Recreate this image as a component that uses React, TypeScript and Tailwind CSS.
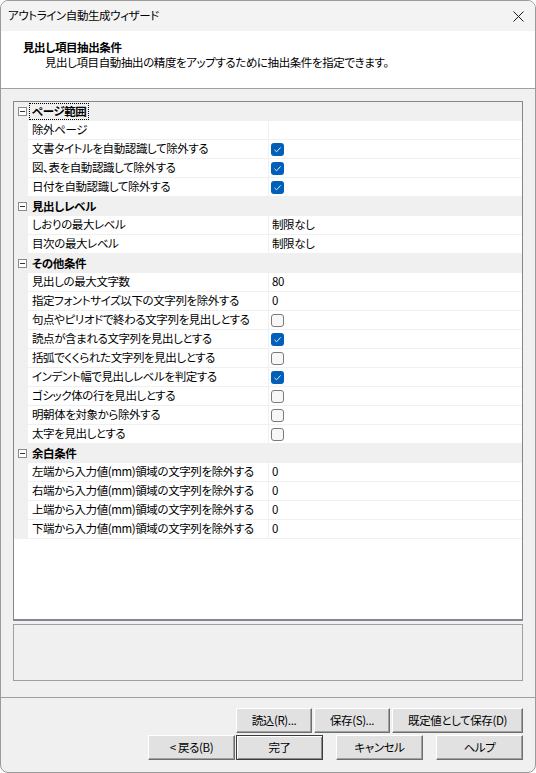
import React from 'react';

type Row =
  | { kind: 'cat'; label: string; focused?: boolean }
  | { kind: 'text'; label: string; value: string }
  | { kind: 'check'; label: string; checked: boolean };

const rows: Row[] = [
  { kind: 'cat', label: 'ページ範囲', focused: true },
  { kind: 'text', label: '除外ページ', value: '' },
  { kind: 'check', label: '文書タイトルを自動認識して除外する', checked: true },
  { kind: 'check', label: '図、表を自動認識して除外する', checked: true },
  { kind: 'check', label: '日付を自動認識して除外する', checked: true },
  { kind: 'cat', label: '見出しレベル' },
  { kind: 'text', label: 'しおりの最大レベル', value: '制限なし' },
  { kind: 'text', label: '目次の最大レベル', value: '制限なし' },
  { kind: 'cat', label: 'その他条件' },
  { kind: 'text', label: '見出しの最大文字数', value: '80' },
  { kind: 'text', label: '指定フォントサイズ以下の文字列を除外する', value: '0' },
  { kind: 'check', label: '句点やピリオドで終わる文字列を見出しとする', checked: false },
  { kind: 'check', label: '読点が含まれる文字列を見出しとする', checked: true },
  { kind: 'check', label: '括弧でくくられた文字列を見出しとする', checked: false },
  { kind: 'check', label: 'インデント幅で見出しレベルを判定する', checked: true },
  { kind: 'check', label: 'ゴシック体の行を見出しとする', checked: false },
  { kind: 'check', label: '明朝体を対象から除外する', checked: false },
  { kind: 'check', label: '太字を見出しとする', checked: false },
  { kind: 'cat', label: '余白条件' },
  { kind: 'text', label: '左端から入力値(mm)領域の文字列を除外する', value: '0' },
  { kind: 'text', label: '右端から入力値(mm)領域の文字列を除外する', value: '0' },
  { kind: 'text', label: '上端から入力値(mm)領域の文字列を除外する', value: '0' },
  { kind: 'text', label: '下端から入力値(mm)領域の文字列を除外する', value: '0' },
];

function CheckBox({ checked }: { checked: boolean }) {
  if (checked) {
    return (
      <div className="w-[13px] h-[13px] rounded-[3px] bg-[#005fb8] flex items-center justify-center">
        <svg width="9" height="9" viewBox="0 0 9 9">
          <path d="M1.5 4.8 L3.6 6.8 L7.6 2.4" fill="none" stroke="#ffffff" strokeWidth="0.9" />
        </svg>
      </div>
    );
  }
  return <div className="w-[13px] h-[13px] rounded-[3px] border border-[#7a7a7a] bg-[#f7f7f7]" />;
}

function MinusBox() {
  return (
    <div className="w-[9px] h-[9px] border border-[#8a8a8a] bg-white flex items-center justify-center">
      <div className="w-[5px] h-px bg-[#333]" />
    </div>
  );
}

function GridRow({ row }: { row: Row }) {
  if (row.kind === 'cat') {
    return (
      <div className="flex h-[19px] bg-[#f0f0f0] items-center">
        <div className="w-[14px] flex justify-center pl-[2px]">
          <MinusBox />
        </div>
        <div
          className={`ml-px h-[17px] px-[3px] flex items-center font-bold ${
            row.focused ? 'outline-1 outline-dotted outline-black -outline-offset-1' : ''
          }`}
        >
          {row.label}
        </div>
      </div>
    );
  }
  return (
    <div className="flex h-[19px]">
      <div className="w-[14px] bg-[#f0f0f0]" />
      <div className="w-[240px] pl-[4px] flex items-center border-b border-[#f0f0f0] whitespace-nowrap overflow-hidden">
        {row.label}
      </div>
      <div className="flex-1 pl-[2px] flex items-center border-l border-b border-[#f0f0f0]">
        {row.kind === 'check' ? <CheckBox checked={row.checked} /> : <span className="pl-px">{row.value}</span>}
      </div>
    </div>
  );
}

function Btn({ label, w, primary }: { label: string; w: string; primary?: boolean }) {
  return (
    <button
      className={`${w} h-[25px] bg-[#e1e1e1] flex items-center justify-center ${
        primary
          ? 'border border-[#3c3c3c] shadow-[inset_1px_1px_0_#ffffff,inset_-1px_-1px_0_#8a8a8a]'
          : 'border border-t-white border-l-white border-r-[#6e6e6e] border-b-[#6e6e6e] shadow-[inset_-1px_-1px_0_#a0a0a0]'
      }`}
    >
      {label}
    </button>
  );
}

export default function App() {
  return (
    <div className="w-[536px] h-[773px] bg-[#f0f0f0] border border-[#9a9a9a] rounded-lg overflow-hidden flex flex-col text-[11.5px] tracking-[-0.4px] text-black font-['Noto_Sans_CJK_JP','Noto_Sans',sans-serif] [font-feature-settings:'palt']">
      <div className="h-[30px] bg-[#f3f3f3] flex items-center justify-between pl-[7px] pr-[11px]">
        <span>アウトライン自動生成ウィザード</span>
        <svg width="11" height="11" viewBox="0 0 11 11">
          <path d="M0.5 0.5 L10.5 10.5 M10.5 0.5 L0.5 10.5" stroke="#1a1a1a" strokeWidth="1" />
        </svg>
      </div>

      <div className="h-[58px] bg-white border-b border-[#a0a0a0] pt-[9px] leading-[15px]">
        <div className="pl-[22px] font-bold">見出し項目抽出条件</div>
        <div className="pl-[44px]">見出し項目自動抽出の精度をアップするために抽出条件を指定できます。</div>
      </div>

      <div className="px-[12px] pt-[12px]">
        <div className="h-[520px] bg-white border border-b-2 border-[#828790] flex flex-col">
          {rows.map((r, i) => (
            <GridRow key={i} row={r} />
          ))}
        </div>
        <div className="mt-[3px] h-[57px] border border-[#a0a0a0] bg-[#f0f0f0]" />
      </div>

      <div className="mt-[16px] border-t border-[#a0a0a0]" />

      <div className="pt-[10px] pr-[12px] flex flex-col items-end gap-[2px]">
        <div className="flex gap-[2px]">
          <Btn label="読込(R)..." w="w-[76px]" />
          <Btn label="保存(S)..." w="w-[76px]" />
          <Btn label="既定値として保存(D)" w="w-[131px]" />
        </div>
        <div className="flex">
          <Btn label="< 戻る(B)" w="w-[87px]" />
          <div className="w-px" />
          <Btn label="完了" w="w-[87px]" primary />
          <div className="w-[13px]" />
          <Btn label="キャンセル" w="w-[87px]" />
          <div className="w-[13px]" />
          <Btn label="ヘルプ" w="w-[87px]" />
        </div>
      </div>
    </div>
  );
}
